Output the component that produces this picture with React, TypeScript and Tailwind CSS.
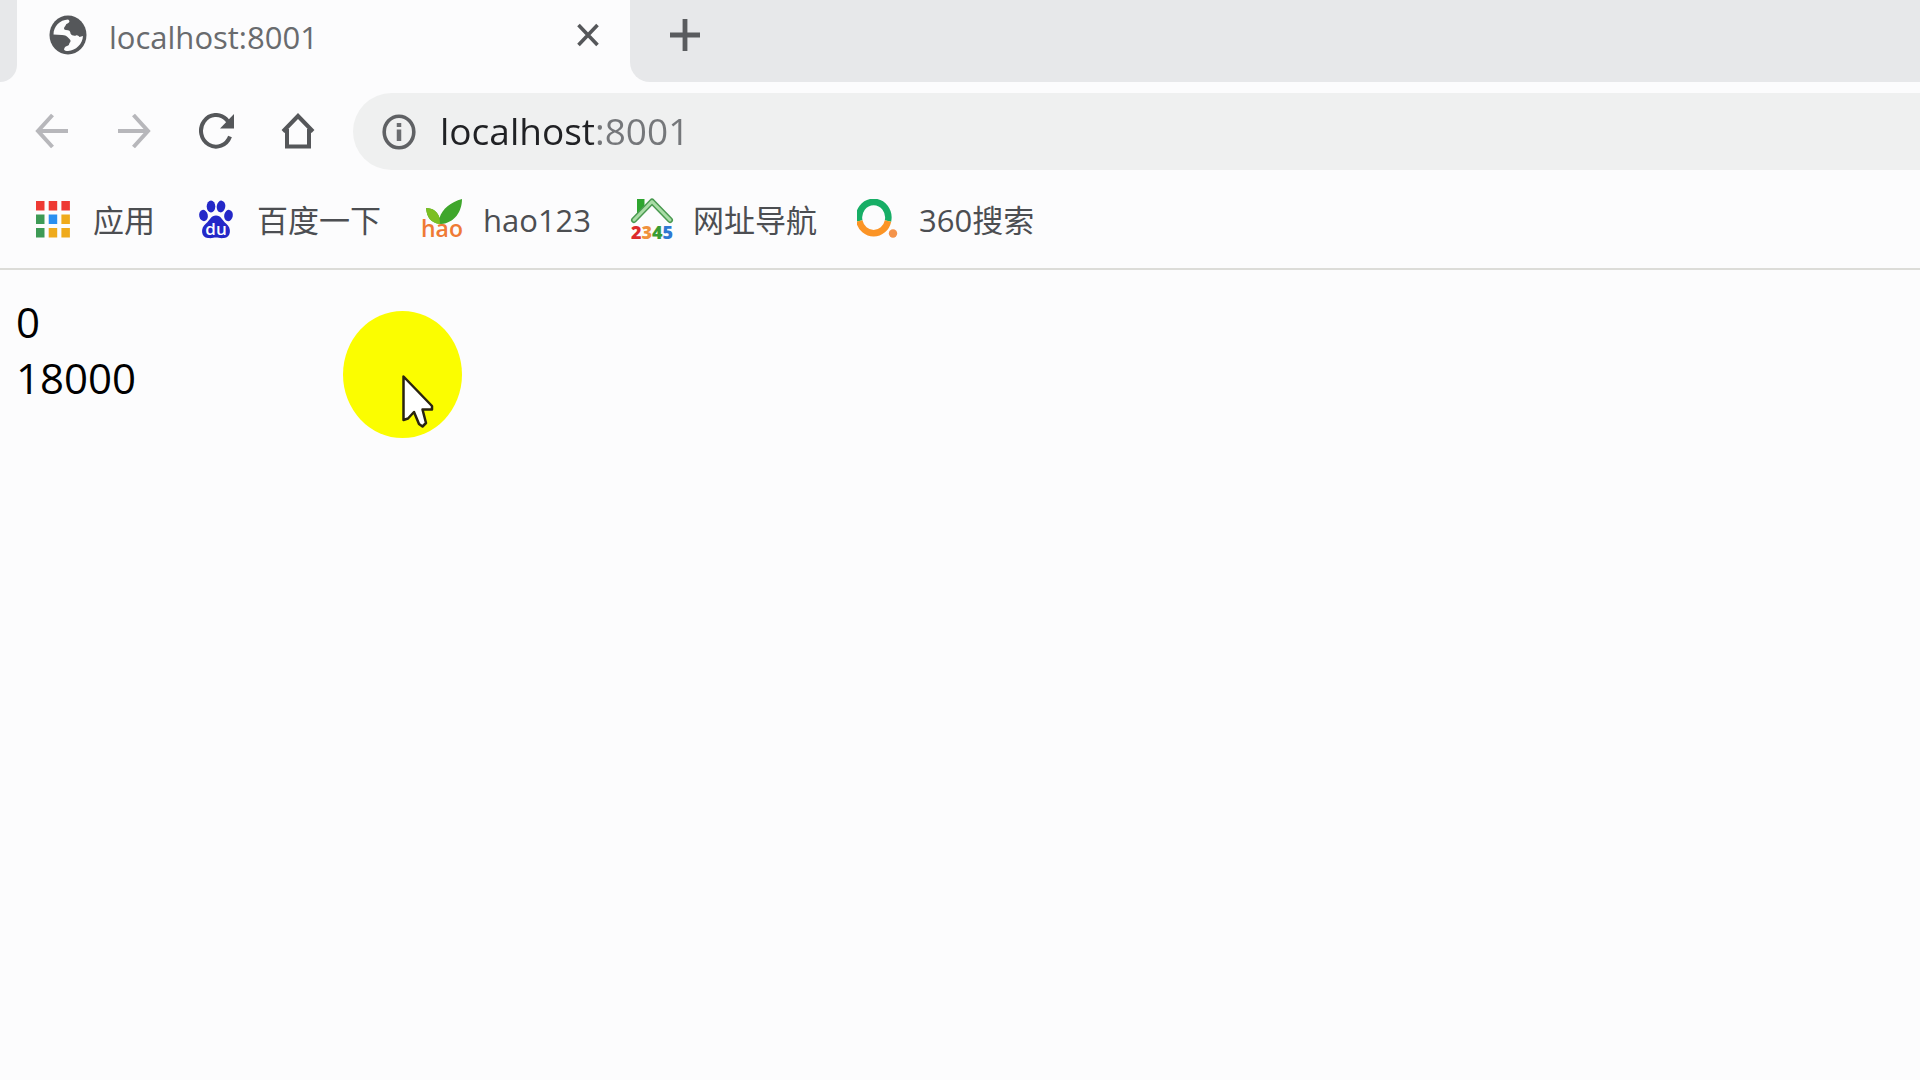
import React from 'react'

interface Bookmark {
  label: string
  icon: React.ReactNode
}

function GlobeIcon() {
  return (
    <svg className="w-[38px] h-10 shrink-0" viewBox="0 0 38 40" preserveAspectRatio="none">
      <ellipse cx="19" cy="20" rx="18.5" ry="19.5" fill="#55575a" />
      <path
        d="M4.500 19.500 C4.500 11 11 5 19 4.500 C21 5.500 21 7.500 18.500 8.500 C16.500 9 17 11 15.500 12 C14.500 13.500 15 15 17 15 C20 15 21.500 16 21.500 18.500 C22.500 20.500 25 21 27 20.500 C28.500 20 29.500 21 30.500 22 L34 21 C33.500 29 27 35.500 19 36 C17 36 15.500 35.500 15 34.500 C15.500 32.500 16 31.500 18 31 C20 30.500 20 29.500 20.500 28 C22 26.500 22 25 20 23.500 C18 21 16 20 13 20 Z"
        fill="#fcfcfd"
      />
    </svg>
  )
}

function CloseIcon() {
  return (
    <svg className="w-[22px] h-6" viewBox="0 0 22 24" fill="none" stroke="#55575a" strokeWidth="3.6">
      <path d="M1.500 2 L20.500 22 M20.500 2 L1.500 22" />
    </svg>
  )
}

function PlusIcon() {
  return (
    <svg className="w-8 h-8" viewBox="0 0 32 32" fill="none" stroke="#5a5c5f" strokeWidth="4.800">
      <path d="M16 0 V32 M1 16 H31" />
    </svg>
  )
}

function BackIcon() {
  return (
    <svg className="w-[34px] h-9" viewBox="0 0 34 36" fill="none" stroke="#b7b7bb" strokeWidth="4">
      <path d="M33 18 H4 M17.500 2 L3 18 L17.500 34" />
    </svg>
  )
}

function ForwardIcon() {
  return (
    <svg className="w-[34px] h-9" viewBox="0 0 34 36" fill="none" stroke="#b7b7bb" strokeWidth="4">
      <path d="M1 18 H30 M16.500 2 L31 18 L16.500 34" />
    </svg>
  )
}

function ReloadIcon() {
  return (
    <svg className="w-9 h-9" viewBox="0 0 36 36" fill="none">
      <path d="M32 23.500 A15 15.800 0 1 1 28.500 6.500 L30 8.500" stroke="#55575a" strokeWidth="4" />
      <path d="M36 1 V15.500 H22 Z" fill="#55575a" />
    </svg>
  )
}

function HomeIcon() {
  return (
    <svg className="w-[34px] h-9" viewBox="0 0 34 36" fill="none" stroke="#55575a" strokeWidth="4">
      <path d="M2 18.500 L17 3 L32 18.500 M6 16 V33.500 H28 V16" />
    </svg>
  )
}

function InfoIcon() {
  return (
    <svg className="w-[34px] h-9 shrink-0" viewBox="0 0 34 36" fill="none">
      <ellipse cx="17" cy="18" rx="14.800" ry="15.800" stroke="#5f6164" strokeWidth="3.600" />
      <path d="M17 15.500 V27" stroke="#6b6d70" strokeWidth="4.500" />
      <path d="M17 9 V13" stroke="#6b6d70" strokeWidth="4.500" />
    </svg>
  )
}

function AppsIcon() {
  const colors = [
    ['#ee3a34', '#ee3a34', '#ee3a34'],
    ['#3d9a55', '#2a8ff0', '#efaa1c'],
    ['#3d9a55', '#efaa1c', '#efaa1c'],
  ]
  return (
    <svg className="w-[42px] h-[42px]" viewBox="0 0 42 42">
      {colors.map((row, y) =>
        row.map((color, x) => (
          <rect key={`${x}-${y}`} x={5 + x * 12.7} y={2 + y * 13.5} width="8.500" height="9.500" fill={color} />
        ))
      )}
    </svg>
  )
}

function BaiduIcon() {
  return (
    <svg className="w-[42px] h-[42px]" viewBox="0 0 42 42">
      <g fill="#2428c8">
        <ellipse cx="8.500" cy="16.500" rx="4.300" ry="5.700" transform="rotate(-12 8.500 16.500)" />
        <ellipse cx="16" cy="7.500" rx="4.300" ry="5.900" />
        <ellipse cx="26" cy="7.500" rx="4.300" ry="5.900" transform="rotate(8 26 7.500)" />
        <ellipse cx="33.500" cy="16.500" rx="4.300" ry="5.700" transform="rotate(10 33.500 16.500)" />
        <path d="M21 16.500 C26 16.500 27 21 31 24.500 C37 29 36 38.500 29 39 C25 39.500 23.500 38.500 21 38.500 C18.500 38.500 17 39.500 13 39 C6 38.500 5 29 11 24.500 C15 21 16 16.500 21 16.500 Z" />
      </g>
      <text x="21" y="36" textAnchor="middle" fill="#ffffff" fontFamily="Open Sans, sans-serif" fontWeight="600" fontSize="17">
        du
      </text>
    </svg>
  )
}

function HaoIcon() {
  return (
    <svg className="w-[42px] h-[42px] overflow-visible" viewBox="0 0 42 42">
      <path d="M5 9 C12 9 17 13 18.500 19 C21 10 30 3 41 0 C41 12 34 24 20 25 C9 24 6 18 5 9 Z" fill="#3fa62c" />
      <path d="M5 9 C12 9 17 13 18.500 19 L19 25 C9 24 6 18 5 9 Z" fill="#7cbf22" />
      <text x="21" y="38" textAnchor="middle" fill="#ef7a35" fontFamily="Open Sans, sans-serif" fontWeight="600" fontSize="23">
        hao
      </text>
    </svg>
  )
}

function HouseIcon() {
  return (
    <svg className="w-[42px] h-[46px] overflow-visible" viewBox="0 0 42 46">
      <path d="M6 2 H13.500 V9 L6 17 Z" fill="#2ea52f" />
      <path d="M3 23 L21 4.500 L39 23" fill="none" stroke="#4a9a50" strokeWidth="6" strokeLinecap="round" strokeLinejoin="round" />
      <path d="M3 23 L21 4.500 L39 23" fill="none" stroke="#a9dca6" strokeWidth="3" strokeLinecap="round" strokeLinejoin="round" />
      <text x="21" y="42" textAnchor="middle" fontFamily="Open Sans, sans-serif" fontWeight="800" fontSize="18">
        <tspan fill="#dc2b2b">2</tspan>
        <tspan fill="#f0913c">3</tspan>
        <tspan fill="#3a9c34">4</tspan>
        <tspan fill="#2e78d2">5</tspan>
      </text>
    </svg>
  )
}

function SearchRingIcon() {
  return (
    <svg className="w-[42px] h-[42px]" viewBox="0 0 42 42" fill="none" strokeWidth="6.500">
      <path d="M2.300 22 A14.700 15.700 0 1 1 31 22" stroke="#17ae66" />
      <path d="M2.300 22 A14.700 15.700 0 0 0 31 22" stroke="#fb9426" />
      <circle cx="36" cy="34.500" r="4.200" fill="#f4934a" />
    </svg>
  )
}

const bookmarks: Bookmark[] = [
  { label: '应用', icon: <AppsIcon /> },
  { label: '百度一下', icon: <BaiduIcon /> },
  { label: 'hao123', icon: <HaoIcon /> },
  { label: '网址导航', icon: <HouseIcon /> },
  { label: '360搜索', icon: <SearchRingIcon /> },
]

const navButtons = [
  { name: 'Back', icon: <BackIcon /> },
  { name: 'Forward', icon: <ForwardIcon /> },
  { name: 'Reload', icon: <ReloadIcon /> },
  { name: 'Home', icon: <HomeIcon /> },
]

function TabStrip() {
  return (
    <header className="flex h-[82px]">
      <div className="w-[17px] bg-[#e7e8ea] rounded-br-[17px]" />
      <div className="w-[613px] flex items-center pl-8 pr-[31px] pb-3">
        <GlobeIcon />
        <span className="ml-[22px] pt-1 flex-1 text-[31px] leading-10 text-[#696b6e]">localhost:8001</span>
        <button aria-label="Close tab">
          <CloseIcon />
        </button>
      </div>
      <div className="flex-1 flex items-center pl-[39px] pb-3 bg-[#e7e8ea] rounded-bl-[20px]">
        <button aria-label="New tab">
          <PlusIcon />
        </button>
      </div>
    </header>
  )
}

function Toolbar() {
  return (
    <div className="flex items-center pt-[11px] pl-[11px]">
      {navButtons.map((button) => (
        <button key={button.name} aria-label={button.name} className="w-[82px] flex justify-center pb-0.5">
          {button.icon}
        </button>
      ))}
      <div className="ml-3.5 h-[77px] flex-1 flex items-center gap-6 pl-[29px] bg-[#eff0f0] rounded-l-full">
        <InfoIcon />
        {/* host is dark, port is dimmed */}
        <input
          aria-label="Address"
          defaultValue="localhost:8001"
          className="flex-1 h-[56px] pb-0.5 text-[37px] outline-none text-transparent bg-clip-text bg-[linear-gradient(90deg,#202124_155px,#75777a_155px)]"
        />
      </div>
    </div>
  )
}

function BookmarksBar() {
  return (
    <nav className="flex items-center gap-10 h-[100px] pt-0.5 pl-[31px] border-b-2 border-[#dcdcd8]">
      {bookmarks.map((bookmark) => (
        <a key={bookmark.label} href="#" className="flex items-center gap-5 text-[31px] leading-10 text-[#4c4e52]">
          {bookmark.icon}
          <span>{bookmark.label}</span>
        </a>
      ))}
    </nav>
  )
}

function Pointer() {
  return (
    <div className="absolute left-[343px] top-[41px]">
      <svg className="w-[120px] h-32" viewBox="0 0 120 128">
        <ellipse cx="59.500" cy="63.500" rx="59.500" ry="63.500" fill="#fbfd00" />
        <path
          d="M60.500 65.500 V109 L65 107.500 L71 101 L76 113 L79.500 115.500 L83 112 L79.500 98.500 H89 V95 Z"
          fill="#ffffff"
          stroke="#2a2410"
          strokeWidth="2.500"
          strokeLinejoin="round"
        />
      </svg>
    </div>
  )
}

export default function App() {
  return (
    <div className="min-h-screen bg-[#fcfcfd] font-['Open_Sans','Noto_Sans_CJK_SC',sans-serif]">
      <TabStrip />
      <Toolbar />
      <BookmarksBar />
      <main className="relative px-4 pt-6 text-[42px] leading-[56px] text-black">
        <p>0</p>
        <p>18000</p>
        <Pointer />
      </main>
    </div>
  )
}
